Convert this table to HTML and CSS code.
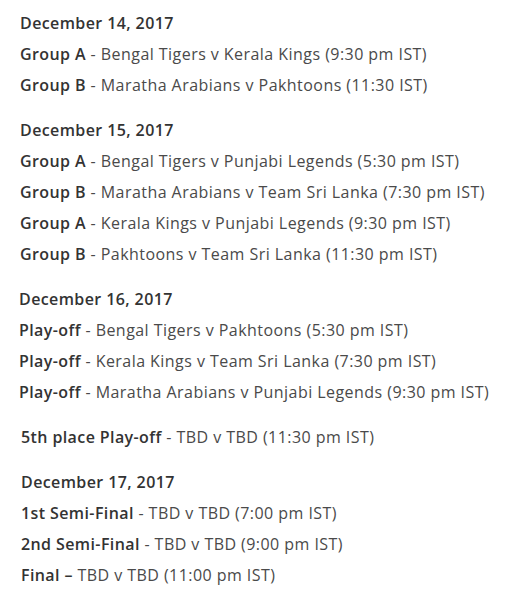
FILE: index.html
```html
<!DOCTYPE html>
<html>
<head>
<meta charset="utf-8">
<link rel="stylesheet" href="styles.css">
</head>
<body>
<div class="schedule">
  <section class="day">
    <p class="date">December 14, 2017</p>
    <p class="match"><b>Group A</b> - Bengal Tigers v Kerala Kings (9:30 pm IST)</p>
    <p class="match"><b>Group B</b> - Maratha Arabians v Pakhtoons (11:30 IST)</p>
  </section>
  <section class="day">
    <p class="date">December 15, 2017</p>
    <p class="match"><b>Group A</b> - Bengal Tigers v Punjabi Legends (5:30 pm IST)</p>
    <p class="match"><b>Group B</b> - Maratha Arabians v Team Sri Lanka (7:30 pm IST)</p>
    <p class="match"><b>Group A</b> - Kerala Kings v Punjabi Legends (9:30 pm IST)</p>
    <p class="match"><b>Group B</b> - Pakhtoons v Team Sri Lanka (11:30 pm IST)</p>
  </section>
  <section class="day shift-l">
    <p class="date">December 16, 2017</p>
    <p class="match"><b>Play-off</b> - Bengal Tigers v Pakhtoons (5:30 pm IST)</p>
    <p class="match"><b>Play-off</b> - Kerala Kings v Team Sri Lanka (7:30 pm IST)</p>
    <p class="match"><b>Play-off</b> - Maratha Arabians v Punjabi Legends (9:30 pm IST)</p>
  </section>
  <section class="day shift-r">
    <p class="match"><b>5th place Play-off</b> - TBD v TBD (11:30 pm IST)</p>
  </section>
  <section class="day shift-r">
    <p class="date">December 17, 2017</p>
    <p class="match"><b>1st Semi-Final</b> - TBD v TBD (7:00 pm IST)</p>
    <p class="match"><b>2nd Semi-Final</b> - TBD v TBD (9:00 pm IST)</p>
    <p class="match"><b>Final –</b> TBD v TBD (11:00 pm IST)</p>
  </section>
</div>
</body>
</html>
```
FILE: styles.css
```css
html, body {
  margin: 0;
  padding: 0;
  background: #ffffff;
}
body {
  font-family: "Open Sans", sans-serif;
  font-size: 16px;
  color: #4a4a4a;
  letter-spacing: 0.45px;
}
.schedule {
  display: flex;
  flex-direction: column;
  gap: 14px;
  padding: 8px 0 0 20px;
}
.day p {
  margin: 0;
  line-height: 31px;
}
.date {
  font-weight: 600;
  color: #333333;
  letter-spacing: 0.4px;
}
.match b {
  font-weight: 600;
  color: #333333;
  letter-spacing: 0.4px;
}
.shift-l {
  margin-left: -1px;
}
.shift-r {
  margin-left: 1px;
}
```
